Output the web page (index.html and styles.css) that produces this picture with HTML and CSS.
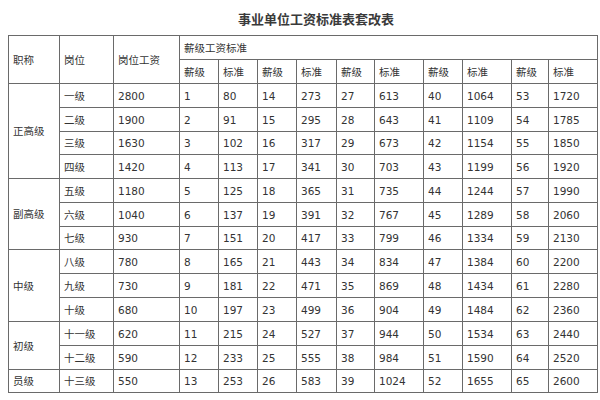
FILE: index.html
```html
<!DOCTYPE html>
<html lang="zh-CN">
<head>
<meta charset="utf-8">
<title>事业单位工资标准表套改表</title>
<link rel="stylesheet" href="styles.css">
</head>
<body>
<div class="page">
  <h1 class="title">事业单位工资标准表套改表</h1>
  <table class="salary">
    <colgroup>
      <col class="c51"><col class="c54"><col class="c66">
      <col class="c39"><col class="c39"><col class="c39"><col class="c40">
      <col class="c38"><col class="c49"><col class="c39"><col class="c49">
      <col class="c37"><col class="c49">
    </colgroup>
    <thead>
      <tr class="r24">
        <th rowspan="2">职称</th>
        <th rowspan="2">岗位</th>
        <th rowspan="2">岗位工资</th>
        <th colspan="10">薪级工资标准</th>
      </tr>
      <tr class="r24">
        <th>薪级</th><th>标准</th><th>薪级</th><th>标准</th><th>薪级</th><th>标准</th><th>薪级</th><th>标准</th><th>薪级</th><th>标准</th>
      </tr>
    </thead>
    <tbody>
      <tr class="r24"><td rowspan="4">正高级</td><td>一级</td><td>2800</td><td>1</td><td>80</td><td>14</td><td>273</td><td>27</td><td>613</td><td>40</td><td>1064</td><td>53</td><td>1720</td></tr>
      <tr class="r24"><td>二级</td><td>1900</td><td>2</td><td>91</td><td>15</td><td>295</td><td>28</td><td>643</td><td>41</td><td>1109</td><td>54</td><td>1785</td></tr>
      <tr class="r23"><td>三级</td><td>1630</td><td>3</td><td>102</td><td>16</td><td>317</td><td>29</td><td>673</td><td>42</td><td>1154</td><td>55</td><td>1850</td></tr>
      <tr class="r24"><td>四级</td><td>1420</td><td>4</td><td>113</td><td>17</td><td>341</td><td>30</td><td>703</td><td>43</td><td>1199</td><td>56</td><td>1920</td></tr>
      <tr class="r24"><td rowspan="3">副高级</td><td>五级</td><td>1180</td><td>5</td><td>125</td><td>18</td><td>365</td><td>31</td><td>735</td><td>44</td><td>1244</td><td>57</td><td>1990</td></tr>
      <tr class="r24"><td>六级</td><td>1040</td><td>6</td><td>137</td><td>19</td><td>391</td><td>32</td><td>767</td><td>45</td><td>1289</td><td>58</td><td>2060</td></tr>
      <tr class="r23"><td>七级</td><td>930</td><td>7</td><td>151</td><td>20</td><td>417</td><td>33</td><td>799</td><td>46</td><td>1334</td><td>59</td><td>2130</td></tr>
      <tr class="r24"><td rowspan="3">中级</td><td>八级</td><td>780</td><td>8</td><td>165</td><td>21</td><td>443</td><td>34</td><td>834</td><td>47</td><td>1384</td><td>60</td><td>2200</td></tr>
      <tr class="r24"><td>九级</td><td>730</td><td>9</td><td>181</td><td>22</td><td>471</td><td>35</td><td>869</td><td>48</td><td>1434</td><td>61</td><td>2280</td></tr>
      <tr class="r24"><td>十级</td><td>680</td><td>10</td><td>197</td><td>23</td><td>499</td><td>36</td><td>904</td><td>49</td><td>1484</td><td>62</td><td>2360</td></tr>
      <tr class="r24"><td rowspan="2">初级</td><td>十一级</td><td>620</td><td>11</td><td>215</td><td>24</td><td>527</td><td>37</td><td>944</td><td>50</td><td>1534</td><td>63</td><td>2440</td></tr>
      <tr class="r24"><td>十二级</td><td>590</td><td>12</td><td>233</td><td>25</td><td>555</td><td>38</td><td>984</td><td>51</td><td>1590</td><td>64</td><td>2520</td></tr>
      <tr class="r23"><td>员级</td><td>十三级</td><td>550</td><td>13</td><td>253</td><td>26</td><td>583</td><td>39</td><td>1024</td><td>52</td><td>1655</td><td>65</td><td>2600</td></tr>
    </tbody>
  </table>
</div>
</body>
</html>
```
FILE: styles.css
```css
html, body {
  margin: 0;
  padding: 0;
  background: #ffffff;
}

.page {
  width: 600px;
  height: 400px;
  overflow: hidden;
  font-family: "DejaVu Sans", "Noto Sans CJK SC", sans-serif;
  color: #333333;
}

.title {
  margin: 0;
  height: 35px;
  padding: 1px 0 0 32px;
  box-sizing: border-box;
  display: flex;
  align-items: center;
  justify-content: center;
  font-family: "Noto Sans CJK SC", sans-serif;
  font-size: 13px;
  font-weight: bold;
  color: #3a3a3a;
}

.salary {
  margin-left: 8px;
  width: 589px;
  table-layout: fixed;
  border-collapse: collapse;
  font-size: 10.5px;
}

.c37 { width: 37px; }
.c38 { width: 38px; }
.c39 { width: 39px; }
.c40 { width: 40px; }
.c49 { width: 49px; }
.c51 { width: 51px; }
.c54 { width: 54px; }
.c66 { width: 66px; }

.r24 { height: 24px; }
.r23 { height: 23px; }

.salary th,
.salary td {
  border: 1px solid #6a6a6a;
  padding: 0 0 0 4px;
  text-align: left;
  vertical-align: middle;
  font-weight: normal;
  white-space: nowrap;
  overflow: hidden;
  line-height: 14px;
}
```
